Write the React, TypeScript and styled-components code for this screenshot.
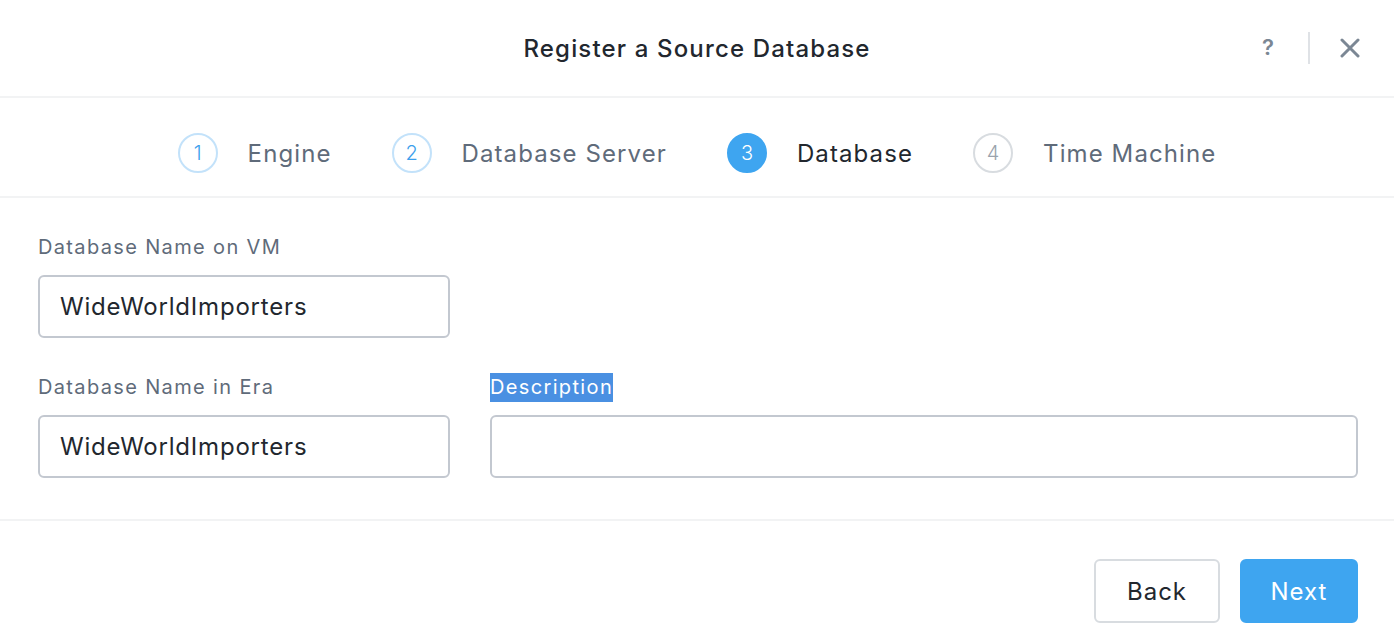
import React from 'react';
import styled, {createGlobalStyle} from 'styled-components';

const GlobalStyle = createGlobalStyle`
  html, body {
    margin: 0;
    padding: 0;
    background: #ffffff;
    font-family: Inter, "Open Sans", sans-serif;
  }
`;

type StepState = 'done' | 'active' | 'todo';

const steps: {num: number; label: string; state: StepState}[] = [
    {num: 1, label: 'Engine', state: 'done'},
    {num: 2, label: 'Database Server', state: 'done'},
    {num: 3, label: 'Database', state: 'active'},
    {num: 4, label: 'Time Machine', state: 'todo'},
];

const App = () => {
    return (
        <>
            <GlobalStyle/>
            <Modal>
                <Header>
                    <Title>Register a Source Database</Title>
                    <HeaderActions>
                        <Help>?</Help>
                        <Divider/>
                        <Close aria-label='close'>
                            <svg width='20' height='20' viewBox='0 0 20 20'>
                                <path d='M2 2 L18 18 M18 2 L2 18' stroke='#7b8794' strokeWidth='3' strokeLinecap='round'/>
                            </svg>
                        </Close>
                    </HeaderActions>
                </Header>
                <Steps>
                    {steps.map((s) => (
                        <Step key={s.num}>
                            <Circle state={s.state}>{s.num}</Circle>
                            <StepLabel active={s.state === 'active'}>{s.label}</StepLabel>
                        </Step>
                    ))}
                </Steps>
                <Form>
                    <Field>
                        <Label>Database Name on VM</Label>
                        <Input defaultValue='WideWorldImporters'/>
                    </Field>
                    <div/>
                    <Field>
                        <Label>Database Name in Era</Label>
                        <Input defaultValue='WideWorldImporters'/>
                    </Field>
                    <Field>
                        <Label><Selected>Description</Selected></Label>
                        <Input defaultValue=''/>
                    </Field>
                </Form>
                <Footer>
                    <Button width={126}>Back</Button>
                    <Button width={118} primary>Next</Button>
                </Footer>
            </Modal>
        </>
    );
};

const Modal = styled.div`
  width: 1394px;
  height: 640px;
  display: flex;
  flex-direction: column;
  background: #ffffff;
  overflow: hidden;
`;

const Header = styled.div`
  height: 96px;
  flex-shrink: 0;
  display: flex;
  align-items: center;
  justify-content: center;
  position: relative;
  border-bottom: 2px solid #f2f3f4;
`;

const Title = styled.div`
  font-size: 24px;
  font-weight: 500;
  letter-spacing: 1.15px;
  color: #22272e;
`;

const HeaderActions = styled.div`
  position: absolute;
  right: 34px;
  top: 0;
  height: 96px;
  display: flex;
  align-items: center;
  gap: 20px;
`;

const Help = styled.span`
  font-size: 22px;
  font-weight: 600;
  color: #7b8794;
  margin-top: -2px;
  margin-right: 4px;
`;

const Divider = styled.span`
  width: 2px;
  height: 32px;
  background: #dfe2e6;
  margin: 0 10px;
`;

const Close = styled.span`
  display: flex;
  align-items: center;
`;

const Steps = styled.div`
  height: 100px;
  flex-shrink: 0;
  display: flex;
  align-items: center;
  justify-content: center;
  gap: 60px;
  border-bottom: 2px solid #f2f3f4;
  padding-top: 12px;
  box-sizing: border-box;
`;

const Step = styled.div`
  display: flex;
  align-items: center;
  gap: 30px;
`;

const Circle = styled.div<{ state: StepState }>`
  width: 40px;
  height: 40px;
  box-sizing: border-box;
  border-radius: 50%;
  display: flex;
  align-items: center;
  justify-content: center;
  font-size: 20px;
  font-weight: 300;
  border: 2px solid ${(p) => p.state === 'done' ? '#c3e2fa' : p.state === 'active' ? '#3ea5f0' : '#d8dce0'};
  background: ${(p) => p.state === 'active' ? '#3ea5f0' : '#ffffff'};
  color: ${(p) => p.state === 'done' ? '#3d9fec' : p.state === 'active' ? '#ffffff' : '#9aa3ad'};
`;

const StepLabel = styled.div<{ active: boolean }>`
  font-size: 24px;
  letter-spacing: 1.1px;
  color: ${(p) => p.active ? '#22272e' : '#5f6b7a'};
`;

const Form = styled.div`
  display: grid;
  grid-template-columns: 412px 868px;
  column-gap: 40px;
  row-gap: 36px;
  padding: 36px 36px 41px 38px;
  border-bottom: 2px solid #f2f3f4;
`;

const Field = styled.div`
  display: flex;
  flex-direction: column;
  gap: 15px;
`;

const Label = styled.label`
  font-size: 20px;
  line-height: 26px;
  letter-spacing: 1.35px;
  color: #5f6b7a;
`;

const Selected = styled.span`
  background: #4a90e2;
  color: #ffffff;
  padding: 2px 0 3px;
`;

const Input = styled.input`
  height: 63px;
  box-sizing: border-box;
  border: 2px solid #c3c8d0;
  border-radius: 6px;
  padding: 0 20px;
  font-family: Inter, "Open Sans", sans-serif;
  font-size: 24px;
  letter-spacing: 0.8px;
  color: #22272e;
  outline: none;
`;

const Footer = styled.div`
  display: flex;
  justify-content: flex-end;
  gap: 20px;
  padding: 38px 36px 0 0;
`;

const Button = styled.button<{ primary?: boolean; width: number }>`
  width: ${(p) => p.width}px;
  height: 64px;
  padding: 0;
  box-sizing: border-box;
  border-radius: 6px;
  font-family: Inter, "Open Sans", sans-serif;
  font-size: 24px;
  letter-spacing: 1px;
  border: 2px solid ${(p) => p.primary ? '#3ea5f0' : '#d8dce0'};
  background: ${(p) => p.primary ? '#3ea5f0' : '#ffffff'};
  color: ${(p) => p.primary ? '#ffffff' : '#22272e'};
  cursor: pointer;
`;

export default App;
